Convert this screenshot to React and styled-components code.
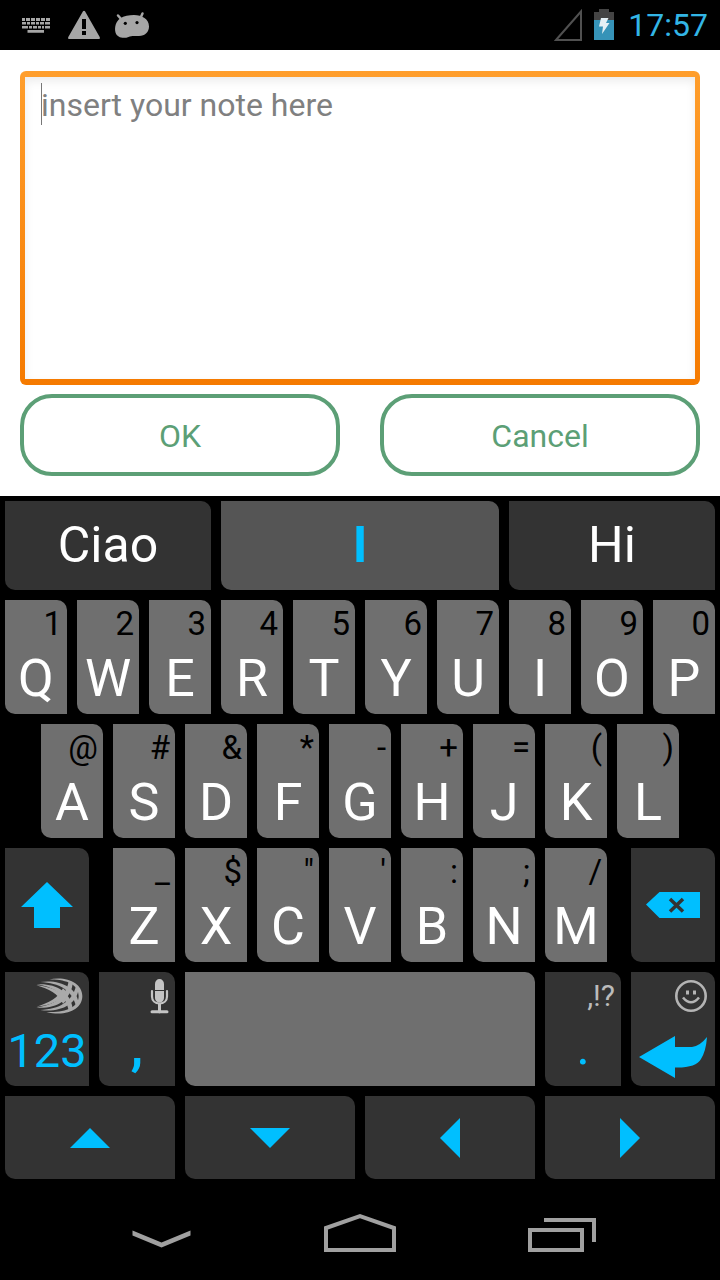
import React from "react";
import styled, { createGlobalStyle } from "styled-components";

const GlobalStyle = createGlobalStyle`
  * { box-sizing: border-box; }
  body {
    margin: 0;
    background: #000;
    font-family: Roboto, "Liberation Sans", sans-serif;
  }
`;

const accent = "#00bfff";

const Screen = styled.div`
  min-height: 100vh;
  display: flex;
  flex-direction: column;
`;

const StatusBar = styled.header`
  height: 50px;
  padding: 0 12px;
  display: flex;
  align-items: center;
  justify-content: space-between;
  background: #000;
`;

const Notifications = styled.div`
  display: flex;
`;

const StatusIcon = styled.svg`
  width: 48px;
  height: 50px;
  fill: #a6a6a6;
`;

const SystemStatus = styled.div`
  display: flex;
  align-items: center;
`;

const SignalIcon = styled.svg`
  width: 28px;
  height: 50px;
  margin-right: 12px;
`;

const BatteryIcon = styled.svg`
  width: 20px;
  height: 50px;
  margin-right: 14px;
`;

const Clock = styled.time`
  font-size: 32px;
  line-height: 50px;
  color: #33b5e5;
`;

const NoteForm = styled.form`
  flex: 1;
  display: flex;
  flex-direction: column;
  gap: 9px;
  padding: 21px 20px 20px;
  background: #fff;
`;

const NoteFrame = styled.div`
  position: relative;
  flex: 1;
  display: flex;
  padding: 6px 5px;
  border-radius: 6px;
  background: linear-gradient(#ff9e2c, #f57a00);
`;

const NoteInput = styled.textarea`
  flex: 1;
  min-width: 0;
  min-height: 120px;
  padding: 9px 16px;
  border: 0;
  outline: 0;
  resize: none;
  background: #fff;
  box-shadow: inset 0 4px 10px rgba(0, 0, 0, 0.08);
  font-family: inherit;
  font-size: 32px;
  line-height: 38px;
  color: #000;
  &::placeholder {
    color: #808080;
    opacity: 1;
  }
`;

const Caret = styled.span`
  position: absolute;
  left: 21px;
  top: 12px;
  width: 1px;
  height: 42px;
  background: #777;
`;

const Actions = styled.div`
  display: flex;
  gap: 40px;
`;

const ActionButton = styled.button`
  flex: 1;
  height: 82px;
  padding: 2px 0 0;
  border: 4px solid #5c9f76;
  border-radius: 32px;
  background: #fff;
  font-family: inherit;
  font-size: 32px;
  line-height: 38px;
  color: #5c9f76;
`;

const Keyboard = styled.section`
  display: flex;
  flex-direction: column;
  gap: 10px;
  padding: 5px 0;
  background: #000;
`;

const KeyRow = styled.div`
  display: flex;
  gap: 10px;
  height: ${(p) => p.$height || 114}px;
  padding: 0 ${(p) => (p.$inset ? "calc(5% + 5px)" : "5px")};
`;

const Spacer = styled.span`
  flex: 4 1 0;
`;

const KeyBase = styled.button`
  flex: ${(p) => p.$weight || 62} 1 0;
  min-width: 0;
  padding: 0;
  border: 0;
  border-radius: 0 10px 0 10px;
  background: ${(p) => (p.$dark ? "#333" : "#6f6f6f")};
  font-family: inherit;
  color: #fff;
`;

const Suggestion = styled(KeyBase)`
  padding-bottom: 2px;
  background: ${(p) => (p.$active ? "#555" : "#333")};
  color: ${(p) => (p.$active ? accent : "#fff")};
  font-size: 50px;
  font-weight: ${(p) => (p.$active ? 700 : 400)};
  line-height: 60px;
`;

const DualKey = styled(KeyBase)`
  display: flex;
  flex-direction: column;
  justify-content: space-between;
  padding: 5px 0;
`;

const IconKey = styled(KeyBase)`
  display: flex;
  align-items: center;
  justify-content: center;
`;

const Hint = styled.span`
  display: flex;
  align-items: center;
  justify-content: flex-end;
  height: 38px;
  padding-right: ${(p) => (p.$light ? 6 : 5)}px;
  font-size: ${(p) => (p.$light ? 30 : 33)}px;
  line-height: 38px;
  color: ${(p) => (p.$light ? "#bbb" : "#000")};
`;

const Label = styled.span`
  display: flex;
  align-items: center;
  justify-content: center;
  height: 60px;
  font-size: ${(p) => p.$size || 52}px;
  font-weight: ${(p) => (p.$bold ? 700 : 400)};
  line-height: 60px;
  color: ${(p) => (p.$accent ? accent : "#fff")};
`;

const PunctuationLabel = styled(Label)`
  padding-bottom: 8px;
`;

const IconLabel = styled(Label)`
  align-items: flex-end;
  padding-bottom: 3px;
`;

const Glyph = styled.svg`
  display: block;
  flex: none;
  width: ${(p) => p.$w}px;
  height: ${(p) => p.$h}px;
  fill: ${accent};
`;

const NavBar = styled.nav`
  height: 96px;
  padding: 0 calc(100% / 12);
  display: flex;
  background: #000;
`;

const NavButton = styled.button`
  flex: 1;
  display: flex;
  align-items: center;
  justify-content: center;
  padding: 0;
  border: 0;
  background: none;
`;

const NavIcon = styled.svg`
  width: 80px;
  height: 48px;
  fill: none;
  stroke: #a0a0a0;
  stroke-width: 4;
`;

const topRow = ["Q1", "W2", "E3", "R4", "T5", "Y6", "U7", "I8", "O9", "P0"];
const homeRow = ["A@", "S#", "D&", "F*", "G-", "H+", "J=", "K(", "L)"];
const bottomRow = ["Z_", "X$", 'C"', "V'", "B:", "N;", "M/"];

const arrows = [
  ["Up", "M0 30 20 10 40 30z"],
  ["Down", "M0 10H40L20 30z"],
  ["Left", "M30 0V40L10 20z"],
  ["Right", "M10 0V40L30 20z"],
];

function LetterKeys({ keys }) {
  return keys.map(([letter, hint]) => (
    <DualKey key={letter} type="button">
      <Hint>{hint}</Hint>
      <Label>{letter}</Label>
    </DualKey>
  ));
}

function KeyboardStatus() {
  return (
    <StatusIcon viewBox="0 0 48 50" aria-label="Keyboard">
      <path d="M10 18h3v3h-3zM14 18h4v3h-4zM19 18h4v3h-4zM24 18h4v3h-4zM29 18h4v3h-4zM34 18h4v3h-4zM10 22h4v2.500h-4zM15 22h3v2.500h-3zM19 22h4v2.500h-4zM24 22h3v2.500h-3zM28 22h4v2.500h-4zM33 22h5v2.500h-5zM10 26h6v2.500h-6zM17 26h3v2.500h-3zM21 26h4v2.500h-4zM26 26h3v2.500h-3zM30 26h2v2.500h-2zM33 26h5v2.500h-5zM15.500 30h16.500v2.700h-16.500z" />
    </StatusIcon>
  );
}

function WarningStatus() {
  return (
    <StatusIcon viewBox="0 0 48 50" aria-label="Warning">
      <path
        fillRule="evenodd"
        d="M25 11.300 39.700 37Q40.500 39 38.500 39H9.500Q7.500 39 8.300 37L23 11.300Q24 10 25 11.300ZM22 19v10h4V19ZM22 31v4h4v-4z"
      />
    </StatusIcon>
  );
}

function BeanStatus() {
  return (
    <StatusIcon viewBox="0 0 48 50" aria-label="Android debugging">
      <path d="M10 15.500 14 20M34.500 13.500 32 19" stroke="#a6a6a6" strokeWidth="2.500" strokeLinecap="round" />
      <path d="M12 18.500C16 15.500 21 15 26 15C34 15 41 19 41 26.500C41 32 37 36 31 36C26 36 23.500 35.500 20.500 37C16 38.800 9 38 7.500 32.500C6.200 27 8 21.500 12 18.500Z" />
      <circle cx="17.300" cy="23.300" r="1.600" fill="#000" />
      <circle cx="29" cy="22.600" r="1.600" fill="#000" />
    </StatusIcon>
  );
}

function SwipeLogo() {
  return (
    <Glyph $w={48} $h={38} viewBox="106 410 144 114" aria-hidden="true">
      <g fill="#aaa">
        <path d="M146 418C200 406 248 428 248 467C248 507 200 530 140 515C196 518 237 502 237 467C237 433 200 416 146 418Z" />
        <path d="M122 425C180 417 230 440 237 488L229 497C216 448 180 429 122 425Z" />
        <path d="M110 432C165 427 213 453 219 504L207 511C199 464 165 440 110 432Z" />
        <path d="M110 435C150 438 184 452 202 478L190 490C175 460 148 446 110 435Z" />
        <path d="M122 509C180 517 230 494 237 446L229 437C216 486 180 505 122 509Z" />
        <path d="M110 502C165 507 213 481 219 430L207 423C199 470 165 494 110 502Z" />
        <path d="M110 499C150 496 184 482 202 456L190 444C175 474 148 488 110 499Z" />
      </g>
    </Glyph>
  );
}

function MicIcon() {
  return (
    <Glyph $w={20} $h={36} viewBox="0 0 20 36" aria-hidden="true">
      <path d="M6 12V6A4.500 5 0 0 1 15 6V12ZM6 13H15V20A4.500 4.500 0 0 1 6 20Z" fill="#c4c4c4" />
      <path d="M3 13V18.500C3 22.500 6 25.500 10.500 25.500S18 22.500 18 18.500V13" fill="none" stroke="#c4c4c4" strokeWidth="2.200" strokeLinecap="round" />
      <path d="M10.500 26V34M3 33.800H18" fill="none" stroke="#c4c4c4" strokeWidth="3" strokeLinecap="round" />
    </Glyph>
  );
}

function SmileIcon() {
  return (
    <Glyph $w={36} $h={36} viewBox="0 0 36 36" aria-hidden="true">
      <g fill="none" stroke="#b4b4b4" strokeWidth="2.600">
        <circle cx="18" cy="18" r="14.700" />
        <path d="M10 19.500Q18 29 26 19.500" />
      </g>
      <path d="M13 12.500h3v4h-3zM20 12.500h3v4h-3z" fill="#b4b4b4" />
    </Glyph>
  );
}

export default function App() {
  return (
    <>
      <GlobalStyle />
      <Screen>
        <StatusBar>
          <Notifications>
            <KeyboardStatus />
            <WarningStatus />
            <BeanStatus />
          </Notifications>
          <SystemStatus>
            <SignalIcon viewBox="0 0 28 50" aria-label="No signal">
              <path d="M2 40 27 11.500V40Z" fill="none" stroke="#505050" strokeWidth="2" />
            </SignalIcon>
            <BatteryIcon viewBox="0 0 20 50" aria-label="Charging">
              <path d="M0 12H5V9H15V12H20V20H0Z" fill="#444" />
              <path d="M0 20H20V40H0Z" fill="#3693b8" />
              <path d="M7 18H14.500L12 23H15.500L8 34L9 26.500H5Z" fill="#e4f0f5" />
            </BatteryIcon>
            <Clock>17:57</Clock>
          </SystemStatus>
        </StatusBar>

        <NoteForm onSubmit={(e) => e.preventDefault()}>
          <NoteFrame>
            <NoteInput aria-label="Note" placeholder="insert your note here" />
            <Caret />
          </NoteFrame>
          <Actions>
            <ActionButton type="submit">OK</ActionButton>
            <ActionButton type="button">Cancel</ActionButton>
          </Actions>
        </NoteForm>

        <Keyboard aria-label="Keyboard">
          <KeyRow $height={89}>
            <Suggestion type="button" $weight={206}>Ciao</Suggestion>
            <Suggestion type="button" $weight={278} $active>I</Suggestion>
            <Suggestion type="button" $weight={206}>Hi</Suggestion>
          </KeyRow>
          <KeyRow>
            <LetterKeys keys={topRow} />
          </KeyRow>
          <KeyRow $inset>
            <LetterKeys keys={homeRow} />
          </KeyRow>
          <KeyRow>
            <IconKey type="button" $weight={84} $dark aria-label="Shift">
              <Glyph $w={52} $h={46} viewBox="0 0 52 46">
                <path d="M26 0 52 25H39V46H13V25H0Z" />
              </Glyph>
            </IconKey>
            <Spacer />
            <LetterKeys keys={bottomRow} />
            <Spacer />
            <IconKey type="button" $weight={84} $dark aria-label="Backspace">
              <Glyph $w={54} $h={26} viewBox="0 0 54 26">
                <path d="M0 12.500 13.500 0H54V26H13.500Z" />
                <path d="M24 7 37 19.500M37 7 24 19.500" stroke="#333" strokeWidth="3.500" />
              </Glyph>
            </IconKey>
          </KeyRow>
          <KeyRow>
            <DualKey type="button" $weight={84} $dark>
              <Hint $light><SwipeLogo /></Hint>
              <Label $accent $size={47}>123</Label>
            </DualKey>
            <DualKey type="button" $weight={76} $dark>
              <Hint $light><MicIcon /></Hint>
              <PunctuationLabel $accent $bold>,</PunctuationLabel>
            </DualKey>
            <KeyBase type="button" $weight={350} aria-label="Space" />
            <DualKey type="button" $weight={76} $dark>
              <Hint $light>,!?</Hint>
              <PunctuationLabel $accent>.</PunctuationLabel>
            </DualKey>
            <DualKey type="button" $weight={84} $dark aria-label="Enter">
              <Hint $light><SmileIcon /></Hint>
              <IconLabel>
                <Glyph $w={68} $h={42} viewBox="0 0 68 42">
                  <path d="M0 21 36 0V11H53Q61 10 68 1Q67 15 62 23Q57 32 36 31.500V42Z" />
                </Glyph>
              </IconLabel>
            </DualKey>
          </KeyRow>
          <KeyRow $height={83}>
            {arrows.map(([name, d]) => (
              <IconKey key={name} type="button" $dark aria-label={name}>
                <Glyph $w={40} $h={40} viewBox="0 0 40 40">
                  <path d={d} />
                </Glyph>
              </IconKey>
            ))}
          </KeyRow>
        </Keyboard>

        <NavBar>
          <NavButton type="button" aria-label="Hide keyboard">
            <NavIcon viewBox="0 0 80 48">
              <path d="M12.500 22.500 41.500 34.500 70.500 22.500V27.500L41.500 39.500 12.500 27.500Z" fill="#a0a0a0" stroke="none" />
            </NavIcon>
          </NavButton>
          <NavButton type="button" aria-label="Home">
            <NavIcon viewBox="0 0 80 48">
              <path d="M6 42V20L40 8 74 20V42Z" />
            </NavIcon>
          </NavButton>
          <NavButton type="button" aria-label="Recent apps">
            <NavIcon viewBox="0 0 80 48">
              <path d="M10 22H62V42H10ZM24 12H74V34" />
            </NavIcon>
          </NavButton>
        </NavBar>
      </Screen>
    </>
  );
}
